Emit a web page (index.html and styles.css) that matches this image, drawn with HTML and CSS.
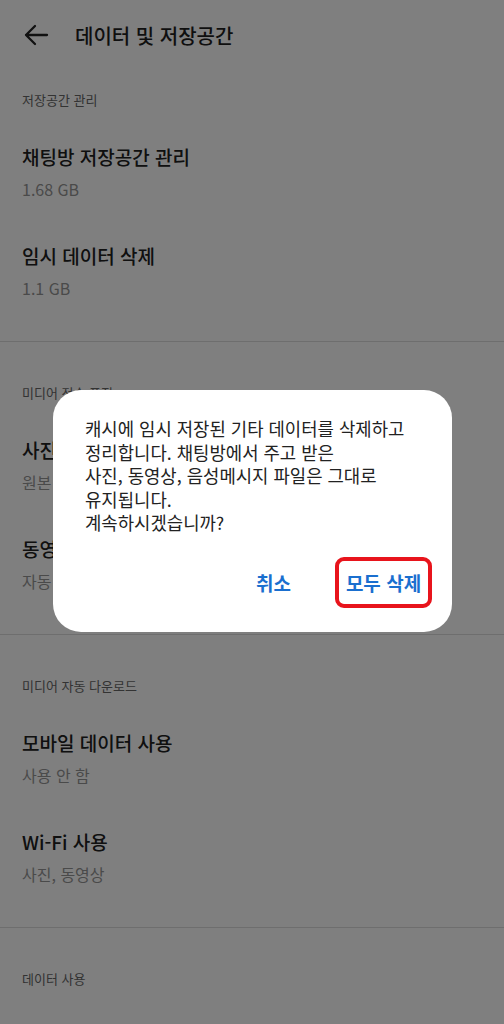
FILE: index.html
```html
<!DOCTYPE html>
<html lang="ko">
  <head>
    <meta charset="UTF-8" />
    <meta name="viewport" content="width=device-width, initial-scale=1.0" />
    <title>데이터 및 저장공간</title>
    <link rel="stylesheet" href="styles.css">
  </head>
  <body>
    <header class="top-bar">
      <svg class="back" width="26" height="22" viewBox="0 0 26 22">
        <path d="M24 11H3M12 2L3 11l9 9" fill="none" stroke="#222" stroke-width="2.3" stroke-linecap="round" stroke-linejoin="round" />
      </svg>
      <h1>데이터 및 저장공간</h1>
    </header>

    <main>
      <section class="section">
        <div class="section-title">저장공간 관리</div>
        <div class="item">
          <div class="item-title">채팅방 저장공간 관리</div>
          <div class="item-sub">1.68 GB</div>
        </div>
        <div class="item">
          <div class="item-title">임시 데이터 삭제</div>
          <div class="item-sub">1.1 GB</div>
        </div>
      </section>

      <section class="section">
        <div class="section-title">미디어 전송 품질</div>
        <div class="item">
          <div class="item-title">사진 화질</div>
          <div class="item-sub">원본</div>
        </div>
        <div class="item">
          <div class="item-title">동영상 화질</div>
          <div class="item-sub">자동</div>
        </div>
      </section>

      <section class="section">
        <div class="section-title">미디어 자동 다운로드</div>
        <div class="item">
          <div class="item-title">모바일 데이터 사용</div>
          <div class="item-sub">사용 안 함</div>
        </div>
        <div class="item">
          <div class="item-title">Wi-Fi 사용</div>
          <div class="item-sub">사진, 동영상</div>
        </div>
      </section>

      <section class="section">
        <div class="section-title">데이터 사용</div>
      </section>
    </main>

    <div class="dim"></div>

    <div class="dialog">
      <p class="dialog-text">캐시에 임시 저장된 기타 데이터를 삭제하고<br>정리합니다. 채팅방에서 주고 받은<br>사진, 동영상, 음성메시지 파일은 그대로<br>유지됩니다.<br>계속하시겠습니까?</p>
      <div class="dialog-buttons">
        <button class="btn">취소</button>
        <button class="btn btn-marked">모두 삭제</button>
      </div>
    </div>
  </body>
</html>
```

FILE: styles.css
```css
* {
  box-sizing: border-box;
}

body {
  margin: 0;
  background-color: #fff;
  font-family: "Noto Sans CJK KR", "Noto Sans", sans-serif;
  color: #222;
  overflow: hidden;
}

.top-bar {
  height: 74px;
  display: flex;
  align-items: center;
  padding: 0 0 4px 23px;
}

.back {
  margin-right: 26px;
}

.top-bar h1 {
  margin: 0;
  font-size: 20px;
  font-weight: 500;
  color: #1e1e1e;
}

.section {
  padding: 16px 0 21px;
}

.section + .section {
  border-top: 1px solid #ddd;
  padding-top: 41px;
}

.section-title {
  padding: 0 22px;
  line-height: 20px;
  font-size: 13px;
  color: #666;
  margin-bottom: 12px;
}

.item {
  padding: 22px 22px 21px;
}

.item-title {
  line-height: 26px;
  font-size: 19px;
  font-weight: 500;
  color: #202020;
}

.item-sub {
  margin-top: 8px;
  line-height: 22px;
  font-size: 16px;
  color: #949494;
}

.dim {
  position: fixed;
  inset: 0;
  background-color: rgba(0, 0, 0, 0.5);
}

.dialog {
  position: fixed;
  top: 390px;
  left: 53px;
  width: 399px;
  height: 242px;
  background-color: #fff;
  border-radius: 28px;
  padding: 27px 20px 24px 32px;
}

.dialog-text {
  margin: 0;
  font-size: 17.8px;
  line-height: 23.5px;
  color: #222;
}

.dialog-buttons {
  display: flex;
  justify-content: flex-end;
  align-items: center;
  gap: 44px;
  margin-top: 22px;
}

.btn {
  border: none;
  background: none;
  font-family: inherit;
  font-size: 19px;
  font-weight: 700;
  color: #1a6fcf;
  padding: 0;
  height: 51px;
}

.btn-marked {
  width: 97px;
  border: 4px solid #e8141c;
  border-radius: 9px;
}
```
